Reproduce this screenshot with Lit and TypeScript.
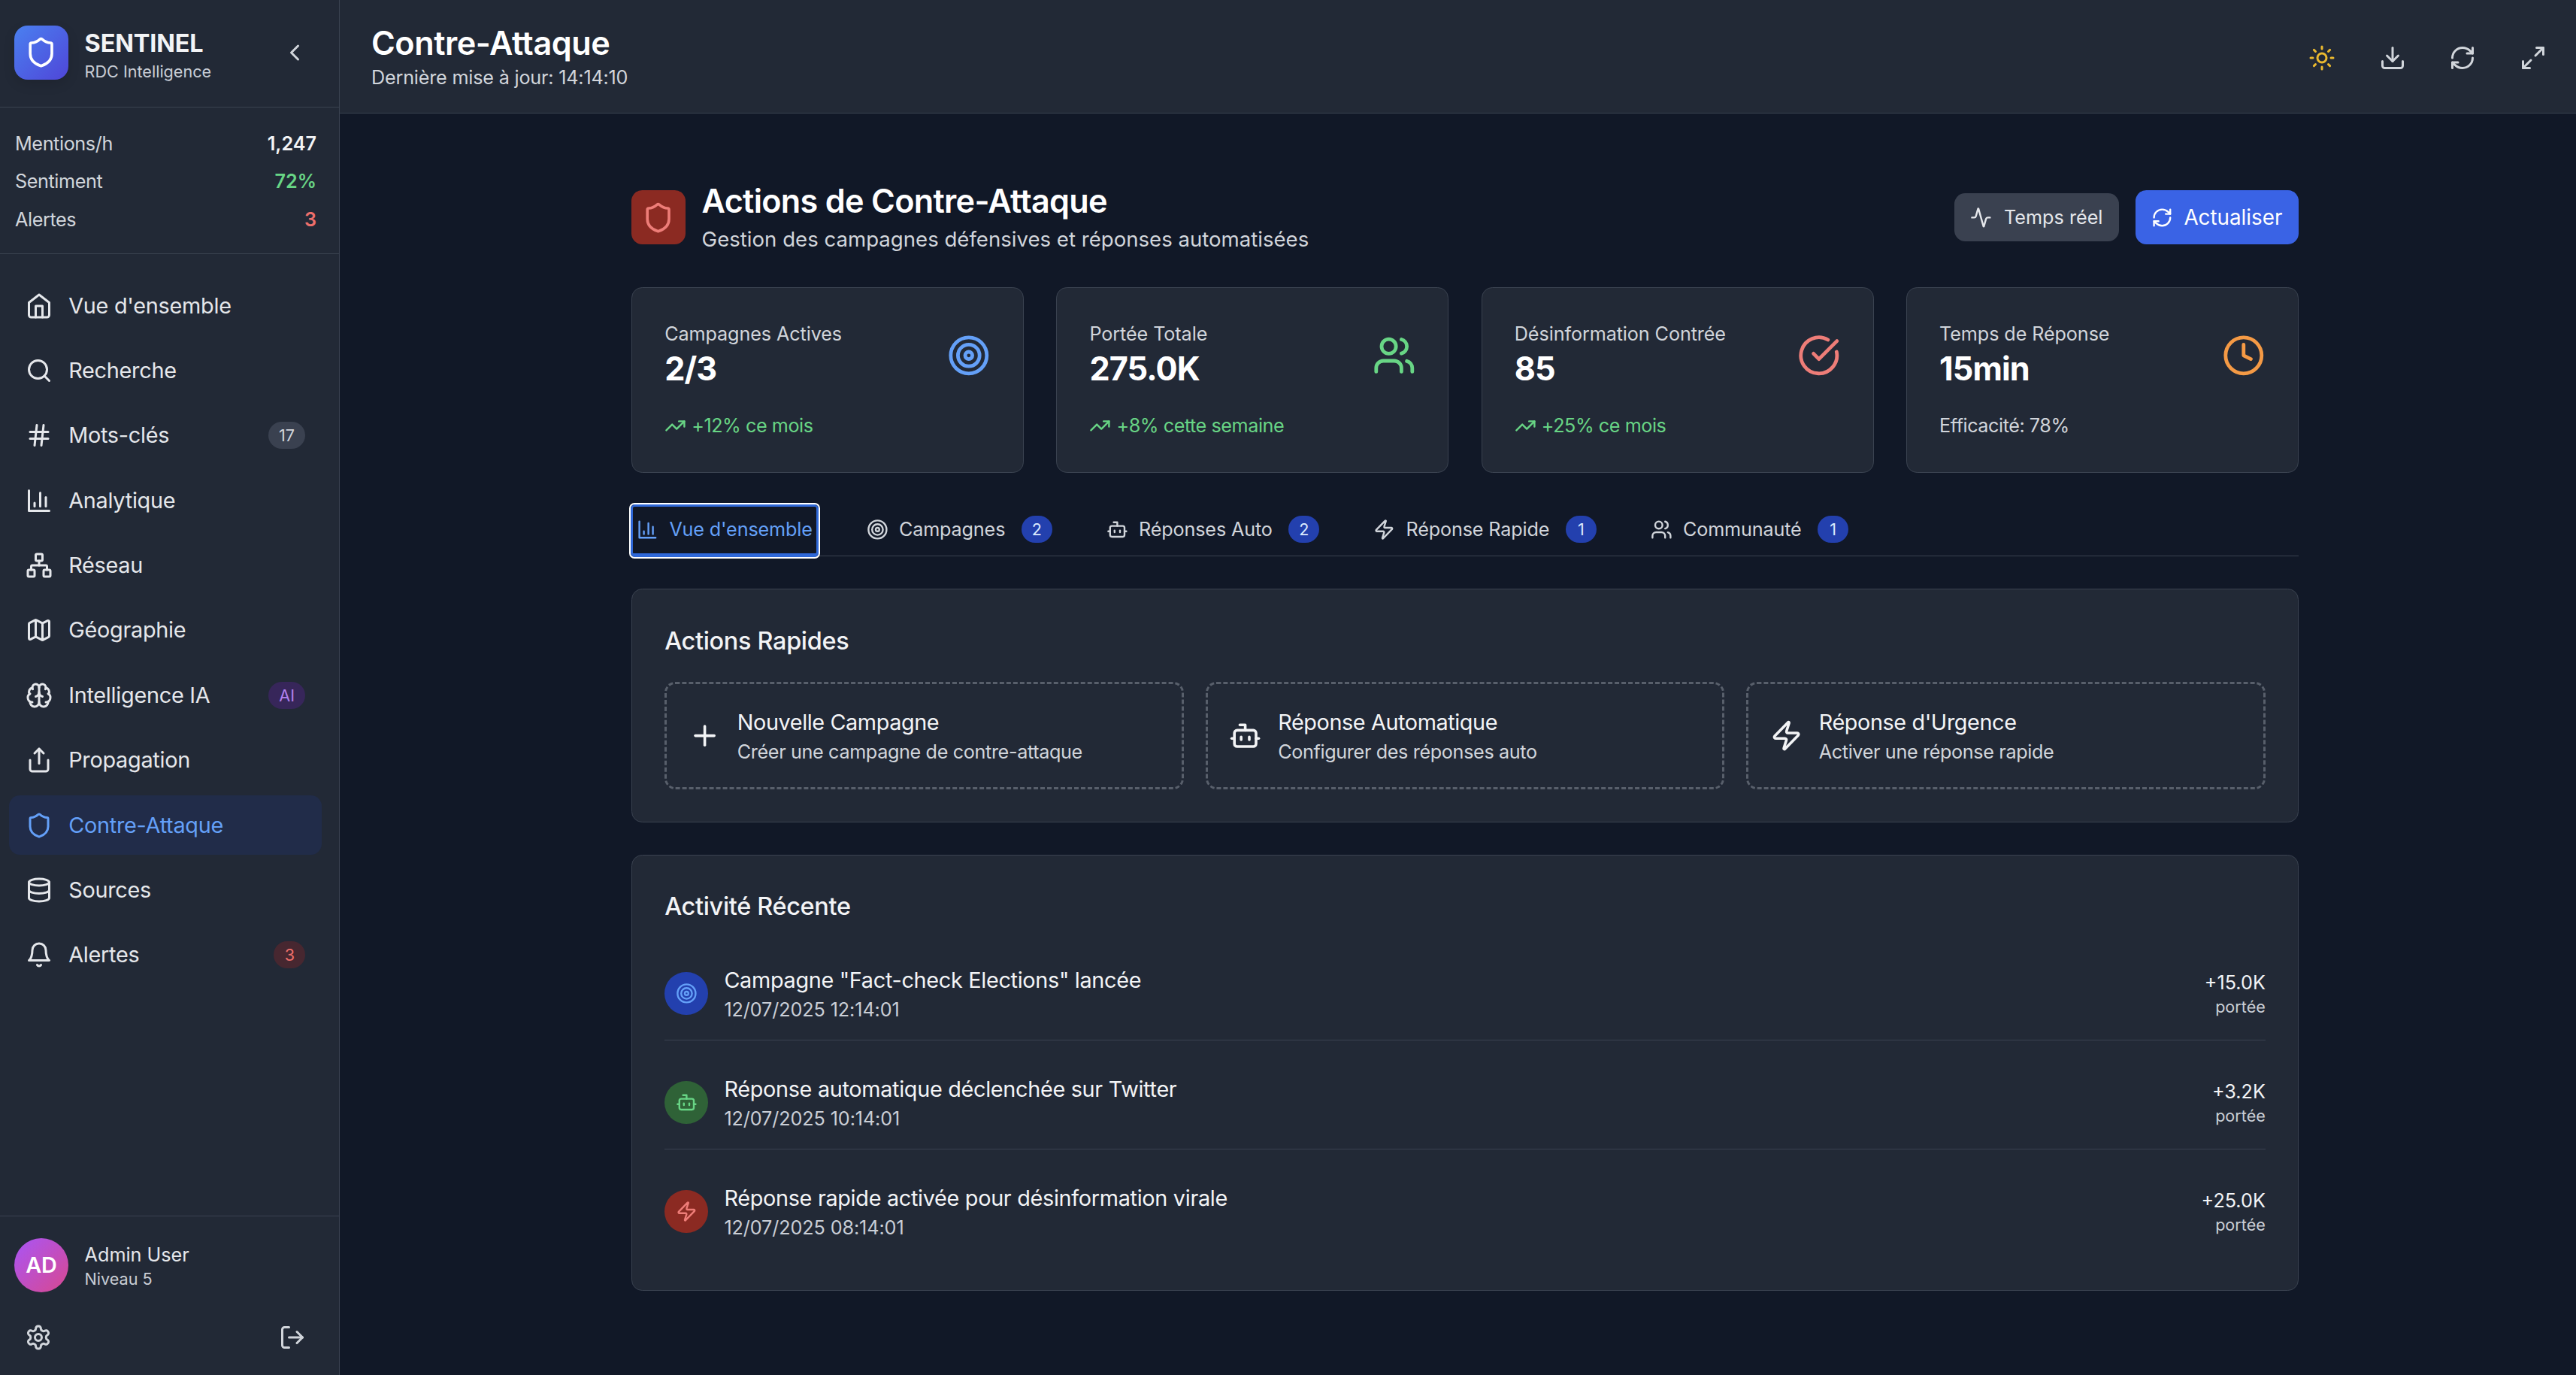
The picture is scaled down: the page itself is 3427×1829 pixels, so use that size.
import { LitElement, html, css, svg } from "lit"
import { customElement } from "lit/decorators.js"

// lucide-style icon bodies, all on a 24 unit grid
const ICONS: Record<string, unknown> = {
  shield: svg`<path d="M20 13c0 5-3.5 7.5-7.66 8.95a1 1 0 0 1-.67-.01C7.5 20.5 4 18 4 13V6a1 1 0 0 1 1-1c2 0 4.5-1.2 6.24-2.72a1.17 1.17 0 0 1 1.52 0C14.51 3.81 17 5 19 5a1 1 0 0 1 1 1z"/>`,
  chevronLeft: svg`<path d="m15 18-6-6 6-6"/>`,
  home: svg`<path d="m3 9 9-7 9 7v11a2 2 0 0 1-2 2H5a2 2 0 0 1-2-2z"/><polyline points="9 22 9 12 15 12 15 22"/>`,
  search: svg`<circle cx="11" cy="11" r="8"/><path d="m21 21-4.3-4.3"/>`,
  hash: svg`<line x1="4" x2="20" y1="9" y2="9"/><line x1="4" x2="20" y1="15" y2="15"/><line x1="10" x2="8" y1="3" y2="21"/><line x1="16" x2="14" y1="3" y2="21"/>`,
  chart: svg`<path d="M3 3v18h18"/><path d="M18 17V9"/><path d="M13 17V5"/><path d="M8 17v-3"/>`,
  network: svg`<rect x="16" y="16" width="6" height="6" rx="1"/><rect x="2" y="16" width="6" height="6" rx="1"/><rect x="9" y="2" width="6" height="6" rx="1"/><path d="M5 16v-3a1 1 0 0 1 1-1h12a1 1 0 0 1 1 1v3"/><path d="M12 12V8"/>`,
  map: svg`<path d="M14.106 5.553a2 2 0 0 0 1.788 0l3.659-1.83A1 1 0 0 1 21 4.619v12.764a1 1 0 0 1-.553.894l-4.553 2.277a2 2 0 0 1-1.788 0l-4.212-2.106a2 2 0 0 0-1.788 0l-3.659 1.83A1 1 0 0 1 3 19.381V6.618a1 1 0 0 1 .553-.894l4.553-2.277a2 2 0 0 1 1.788 0z"/><path d="M15 5.764v15"/><path d="M9 3.236v15"/>`,
  brain: svg`<path d="M12 18V5"/><path d="M15 13a4.17 4.17 0 0 1-3-4 4.17 4.17 0 0 1-3 4"/><path d="M17.598 6.5A3 3 0 1 0 12 5a3 3 0 1 0-5.598 1.5"/><path d="M17.997 5.125a4 4 0 0 1 2.526 5.77"/><path d="M18 18a4 4 0 0 0 2-7.464"/><path d="M19.967 17.483A4 4 0 1 1 12 18a4 4 0 1 1-7.967-.517"/><path d="M6 18a4 4 0 0 1-2-7.464"/><path d="M6.003 5.125a4 4 0 0 0-2.526 5.77"/>`,
  share: svg`<path d="M4 12v8a2 2 0 0 0 2 2h12a2 2 0 0 0 2-2v-8"/><polyline points="16 6 12 2 8 6"/><line x1="12" x2="12" y1="2" y2="15"/>`,
  database: svg`<ellipse cx="12" cy="5" rx="9" ry="3"/><path d="M3 5V19A9 3 0 0 0 21 19V5"/><path d="M3 12A9 3 0 0 0 21 12"/>`,
  bell: svg`<path d="M6 8a6 6 0 0 1 12 0c0 7 3 9 3 9H3s3-2 3-9"/><path d="M10.3 21a1.94 1.94 0 0 0 3.4 0"/>`,
  settings: svg`<path d="M12.22 2h-.44a2 2 0 0 0-2 2v.18a2 2 0 0 1-1 1.73l-.43.25a2 2 0 0 1-2 0l-.15-.08a2 2 0 0 0-2.73.73l-.22.38a2 2 0 0 0 .73 2.73l.15.1a2 2 0 0 1 1 1.72v.51a2 2 0 0 1-1 1.74l-.15.09a2 2 0 0 0-.73 2.73l.22.38a2 2 0 0 0 2.73.73l.15-.08a2 2 0 0 1 2 0l.43.25a2 2 0 0 1 1 1.73V20a2 2 0 0 0 2 2h.44a2 2 0 0 0 2-2v-.18a2 2 0 0 1 1-1.73l.43-.25a2 2 0 0 1 2 0l.15.08a2 2 0 0 0 2.73-.73l.22-.39a2 2 0 0 0-.73-2.73l-.15-.08a2 2 0 0 1-1-1.74v-.5a2 2 0 0 1 1-1.74l.15-.09a2 2 0 0 0 .73-2.73l-.22-.38a2 2 0 0 0-2.73-.73l-.15.08a2 2 0 0 1-2 0l-.43-.25a2 2 0 0 1-1-1.73V4a2 2 0 0 0-2-2z"/><circle cx="12" cy="12" r="3"/>`,
  logout: svg`<path d="M9 21H5a2 2 0 0 1-2-2V5a2 2 0 0 1 2-2h4"/><polyline points="16 17 21 12 16 7"/><line x1="21" x2="9" y1="12" y2="12"/>`,
  sun: svg`<circle cx="12" cy="12" r="4"/><path d="M12 2v2"/><path d="M12 20v2"/><path d="m4.93 4.93 1.41 1.41"/><path d="m17.66 17.66 1.41 1.41"/><path d="M2 12h2"/><path d="M20 12h2"/><path d="m6.34 17.66-1.41 1.41"/><path d="m19.07 4.93-1.41 1.41"/>`,
  download: svg`<path d="M21 15v4a2 2 0 0 1-2 2H5a2 2 0 0 1-2-2v-4"/><polyline points="7 10 12 15 17 10"/><line x1="12" x2="12" y1="15" y2="3"/>`,
  refresh: svg`<path d="M3 12a9 9 0 0 1 9-9 9.75 9.75 0 0 1 6.74 2.74L21 8"/><path d="M21 3v5h-5"/><path d="M21 12a9 9 0 0 1-9 9 9.75 9.75 0 0 1-6.74-2.74L3 16"/><path d="M8 16H3v5"/>`,
  maximize: svg`<polyline points="15 3 21 3 21 9"/><line x1="21" x2="14" y1="3" y2="10"/><polyline points="9 21 3 21 3 15"/><line x1="3" x2="10" y1="21" y2="14"/>`,
  activity: svg`<path d="M22 12h-2.48a2 2 0 0 0-1.93 1.46l-2.35 8.36a.25.25 0 0 1-.48 0L9.24 2.18a.25.25 0 0 0-.48 0l-2.35 8.36A2 2 0 0 1 4.49 12H2"/>`,
  target: svg`<circle cx="12" cy="12" r="10"/><circle cx="12" cy="12" r="6"/><circle cx="12" cy="12" r="2"/>`,
  users: svg`<path d="M16 21v-2a4 4 0 0 0-4-4H6a4 4 0 0 0-4 4v2"/><circle cx="9" cy="7" r="4"/><path d="M22 21v-2a4 4 0 0 0-3-3.87"/><path d="M16 3.13a4 4 0 0 1 0 7.75"/>`,
  check: svg`<path d="M21.801 10A10 10 0 1 1 17 3.335"/><path d="m9 11 3 3L22 4"/>`,
  clock: svg`<circle cx="12" cy="12" r="10"/><polyline points="12 6 12 12 16 14"/>`,
  trending: svg`<polyline points="22 7 13.5 15.5 8.5 10.5 2 17"/><polyline points="16 7 22 7 22 13"/>`,
  bot: svg`<path d="M12 8V4H8"/><rect x="4" y="8" width="16" height="12" rx="2"/><path d="M2 14h2"/><path d="M20 14h2"/><path d="M15 13v2"/><path d="M9 13v2"/>`,
  zap: svg`<path d="M4 14a1 1 0 0 1-.78-1.63l9.9-10.2a.5.5 0 0 1 .86.46l-1.92 6.02A1 1 0 0 0 13 10h7a1 1 0 0 1 .78 1.63l-9.9 10.2a.5.5 0 0 1-.86-.46l1.92-6.02A1 1 0 0 0 11 14z"/>`,
  plus: svg`<path d="M5 12h14"/><path d="M12 5v14"/>`,
}

const icon = (name: string, size: number) => html`<svg
  class="icon"
  width=${size}
  height=${size}
  viewBox="0 0 24 24"
  fill="none"
  stroke="currentColor"
  stroke-width="2"
  stroke-linecap="round"
  stroke-linejoin="round"
>${ICONS[name]}</svg>`

const NAV = [
  { label: "Vue d'ensemble", icon: "home" },
  { label: "Recherche", icon: "search" },
  { label: "Mots-clés", icon: "hash", badge: "17", tone: "gray" },
  { label: "Analytique", icon: "chart" },
  { label: "Réseau", icon: "network" },
  { label: "Géographie", icon: "map" },
  { label: "Intelligence IA", icon: "brain", badge: "AI", tone: "purple" },
  { label: "Propagation", icon: "share" },
  { label: "Contre-Attaque", icon: "shield", active: true },
  { label: "Sources", icon: "database" },
  { label: "Alertes", icon: "bell", badge: "3", tone: "red" },
]

const STATS = [
  { label: "Campagnes Actives", value: "2/3", icon: "target", color: "blue", trend: "+12% ce mois" },
  { label: "Portée Totale", value: "275.0K", icon: "users", color: "green", trend: "+8% cette semaine" },
  { label: "Désinformation Contrée", value: "85", icon: "check", color: "red", trend: "+25% ce mois" },
  { label: "Temps de Réponse", value: "15min", icon: "clock", color: "orange", note: "Efficacité: 78%" },
]

const TABS = [
  { label: "Vue d'ensemble", icon: "chart", active: true },
  { label: "Campagnes", icon: "target", count: 2 },
  { label: "Réponses Auto", icon: "bot", count: 2 },
  { label: "Réponse Rapide", icon: "zap", count: 1 },
  { label: "Communauté", icon: "users", count: 1 },
]

const QUICK = [
  { title: "Nouvelle Campagne", sub: "Créer une campagne de contre-attaque", icon: "plus" },
  { title: "Réponse Automatique", sub: "Configurer des réponses auto", icon: "bot" },
  { title: "Réponse d'Urgence", sub: "Activer une réponse rapide", icon: "zap" },
]

const ACTIVITY = [
  { title: 'Campagne "Fact-check Elections" lancée', time: "12/07/2025 12:14:01", reach: "+15.0K", icon: "target", tone: "blue" },
  { title: "Réponse automatique déclenchée sur Twitter", time: "12/07/2025 10:14:01", reach: "+3.2K", icon: "bot", tone: "green" },
  { title: "Réponse rapide activée pour désinformation virale", time: "12/07/2025 08:14:01", reach: "+25.0K", icon: "zap", tone: "red" },
]

@customElement("app-root")
export class AppRoot extends LitElement {
  static styles = css`
    :host {
      display: flex;
      height: 100vh;
      width: 100%;
      overflow: hidden;
      background: #111827;
      color: #f3f4f6;
      font-family: Inter, "Liberation Sans", sans-serif;
      font-size: 25.2px;
      line-height: 36px;
    }

    .icon {
      flex: none;
      display: block;
    }

    /* sidebar */
    .sidebar {
      flex: none;
      box-sizing: border-box;
      width: 452px;
      display: flex;
      flex-direction: column;
      background: #222936;
      border-right: 1px solid #3a4250;
    }

    .brand {
      box-sizing: border-box;
      height: 143px;
      display: flex;
      align-items: center;
      gap: 21.6px;
      padding: 0 41px 2px 19px;
      border-bottom: 1px solid #3a4250;
    }

    .logo {
      flex: none;
      width: 72px;
      height: 72px;
      border-radius: 18px;
      display: flex;
      align-items: center;
      justify-content: center;
      color: #fff;
      background: linear-gradient(135deg, #4a80f0, #4f46d8);
      box-shadow: 0 6px 16px rgba(0, 0, 0, 0.12);
    }

    .brand-text {
      flex: 1;
    }

    .brand-name {
      margin-top: 3px;
      font-size: 32.4px;
      line-height: 50.4px;
      font-weight: 700;
      letter-spacing: -0.15px;
      color: #f3f4f6;
    }

    .brand-sub {
      margin-top: -3px;
      font-size: 21.6px;
      line-height: 28.8px;
      color: #c9ced6;
    }

    .collapse {
      color: #d1d5db;
    }

    .quick-stats {
      box-sizing: border-box;
      height: 195px;
      padding: 30px 30px 0 20px;
      border-bottom: 1px solid #3a4250;
      display: flex;
      flex-direction: column;
      gap: 14.4px;
    }

    .quick-stats div {
      display: flex;
      justify-content: space-between;
      letter-spacing: -0.4px;
      color: #d1d5db;
    }

    .quick-stats b {
      font-weight: 600;
      letter-spacing: 0;
      color: #f3f4f6;
    }

    .quick-stats b.green {
      color: #68d585;
    }

    .quick-stats b.red {
      color: #ee6f6b;
    }

    nav {
      flex: 1;
      padding: 29px 23px 0 12px;
      display: flex;
      flex-direction: column;
      gap: 7.2px;
    }

    .nav-item {
      box-sizing: border-box;
      height: 79.2px;
      padding: 0 21.6px;
      display: flex;
      align-items: center;
      gap: 21.6px;
      border-radius: 14.4px;
      font-size: 28.8px;
      letter-spacing: -0.25px;
      color: #e5e7eb;
    }

    .nav-item span {
      flex: 1;
    }

    .nav-item.active {
      background: #212c49;
      color: #64a0f8;
    }

    .nav-item em {
      font-style: normal;
      font-size: 21.6px;
      line-height: 36px;
      letter-spacing: 0;
      padding: 0 14.4px;
      border-radius: 18px;
    }

    em.gray {
      background: #3a4150;
      color: #d1d5db;
    }

    em.purple {
      background: #37265a;
      color: #b080ef;
    }

    em.red {
      background: #472730;
      color: #ee6f6b;
    }

    .user {
      box-sizing: border-box;
      height: 212px;
      padding: 29px 21.6px 0 19px;
      border-top: 1px solid #3a4250;
    }

    .user-row {
      display: flex;
      align-items: center;
      gap: 21.6px;
    }

    .avatar {
      flex: none;
      width: 72px;
      height: 72px;
      border-radius: 50%;
      display: flex;
      align-items: center;
      justify-content: center;
      color: #fff;
      font-size: 28.8px;
      font-weight: 600;
      background: linear-gradient(135deg, #a855f7, #d9488f);
    }

    .user-name {
      color: #e5e7eb;
    }

    .user-level {
      font-size: 21.6px;
      line-height: 28.8px;
      color: #c9ced6;
    }

    .user-tools {
      margin-top: 42px;
      padding: 0 22px 0 14px;
      display: flex;
      justify-content: space-between;
      color: #d1d5db;
    }

    /* top bar */
    .main {
      flex: 1;
      min-width: 0;
      display: flex;
      flex-direction: column;
    }

    .topbar {
      flex: none;
      box-sizing: border-box;
      height: 151px;
      padding: 3px 39px 0 42px;
      display: flex;
      align-items: center;
      justify-content: space-between;
      background: #222936;
      border-bottom: 1px solid #3a4250;
    }

    .page-title {
      font-size: 43.2px;
      line-height: 50px;
      font-weight: 600;
      letter-spacing: -0.45px;
      color: #fff;
    }

    .page-sub {
      margin-top: 3px;
      letter-spacing: -0.2px;
      color: #d1d5db;
    }

    .top-tools {
      display: flex;
      gap: 57.6px;
      color: #d1d5db;
    }

    .top-tools .sun {
      color: #ebb92f;
    }

    /* content */
    .content {
      flex: 1;
      padding: 88px 0 0 388px;
    }

    .column {
      width: 2218px;
      display: flex;
      flex-direction: column;
    }

    .head {
      display: flex;
      align-items: center;
      gap: 21.6px;
      margin-bottom: 42px;
    }

    .head-icon {
      flex: none;
      width: 72px;
      height: 72px;
      border-radius: 14.4px;
      display: flex;
      align-items: center;
      justify-content: center;
      background: #8b2a22;
      color: #ee7d78;
    }

    .head-text {
      flex: 1;
    }

    .head-title {
      font-size: 43.2px;
      line-height: 57.6px;
      font-weight: 600;
      letter-spacing: -0.7px;
      color: #fff;
    }

    .head-sub {
      font-size: 27.6px;
      line-height: 43.2px;
      color: #d1d5db;
    }

    .btn {
      display: flex;
      align-items: center;
      gap: 14.4px;
      box-sizing: border-box;
      border-radius: 14.4px;
      padding: 0 21.6px;
    }

    .btn.ghost {
      height: 64px;
      gap: 16px;
      background: #3a4150;
      color: #e5e7eb;
    }

    .btn.primary {
      height: 72px;
      font-size: 27.8px;
      background: #3a63e5;
      color: #fff;
    }

    .stats {
      display: grid;
      grid-template-columns: repeat(4, 1fr);
      gap: 43.2px;
    }

    .panel {
      box-sizing: border-box;
      background: #222936;
      border: 1px solid #3a4250;
      border-radius: 14.4px;
      padding: 43.2px;
    }

    .stat-top {
      display: flex;
      align-items: center;
      justify-content: space-between;
    }

    .stat-label {
      letter-spacing: -0.1px;
      color: #d1d5db;
    }

    .stat-value {
      font-size: 43.2px;
      line-height: 57.6px;
      font-weight: 700;
      letter-spacing: -0.9px;
      color: #fff;
    }

    .stat-foot {
      margin-top: 28.8px;
      display: flex;
      align-items: center;
      gap: 7.2px;
      letter-spacing: -0.45px;
      color: #68d585;
    }

    .stat-foot.plain {
      color: #d1d5db;
    }

    .blue {
      color: #64a0f8;
    }

    .green {
      color: #68d585;
    }

    .red {
      color: #ee7d78;
    }

    .orange {
      color: #f59a45;
    }

    /* tabs */
    .tabs {
      margin: 43.2px 0;
      display: flex;
      gap: 57.6px;
      border-bottom: 1px solid #3a4250;
    }

    .tab {
      box-sizing: border-box;
      position: relative;
      margin-bottom: -1px;
      padding: 14.4px 7.2px 18px;
      display: flex;
      align-items: center;
      gap: 14.4px;
      letter-spacing: -0.15px;
      color: #d1d5db;
    }

    .tab.active {
      color: #64a0f8;
      border-radius: 4px;
      outline: 2px solid #fff;
      outline-offset: 1px;
      box-shadow:
        0 0 0 1px #2f68d8,
        inset 0 0 0 2px #2f68d8,
        inset 0 -4px 0 #2f68d8;
    }

    .tab i {
      font-style: normal;
      margin-left: 7.2px;
      width: 41px;
      height: 36px;
      border-radius: 18px;
      display: flex;
      align-items: center;
      justify-content: center;
      font-size: 21.6px;
      background: #2340ae;
      color: #dbeafe;
    }

    .panel-title {
      font-size: 32.4px;
      line-height: 50.4px;
      font-weight: 500;
      letter-spacing: -0.3px;
      color: #f3f4f6;
    }

    .quick {
      margin-top: 28.8px;
      display: grid;
      grid-template-columns: repeat(3, 1fr);
      gap: 28.8px;
    }

    .quick-card {
      box-sizing: border-box;
      border: 3px dashed #585f6b;
      border-radius: 14.4px;
      padding: 28.8px;
      display: flex;
      align-items: center;
      gap: 21.6px;
      color: #f3f4f6;
    }

    .quick-title {
      font-size: 28.8px;
      line-height: 43.2px;
      letter-spacing: -0.4px;
    }

    .quick-sub {
      letter-spacing: -0.36px;
      color: #d1d5db;
    }

    .recent {
      margin-top: 43.2px;
    }

    .feed {
      margin-top: 28.8px;
      display: flex;
      flex-direction: column;
      gap: 21.6px;
    }

    .feed-row {
      padding: 21.6px 0;
      display: flex;
      align-items: center;
      gap: 21.6px;
      border-bottom: 1px solid #3a4250;
    }

    .feed-row:last-child {
      border-bottom: none;
    }

    .dot {
      flex: none;
      width: 57.6px;
      height: 57.6px;
      border-radius: 50%;
      display: flex;
      align-items: center;
      justify-content: center;
    }

    .dot.blue {
      background: #2340ae;
    }

    .dot.green {
      background: #2f6237;
    }

    .dot.red {
      background: #8b2a22;
    }

    .feed-text {
      flex: 1;
    }

    .feed-title {
      font-size: 28.8px;
      line-height: 43.2px;
      letter-spacing: -0.3px;
      color: #f3f4f6;
    }

    .feed-time {
      letter-spacing: -0.1px;
      color: #c9ced6;
    }

    .feed-reach {
      text-align: right;
      color: #f3f4f6;
    }

    .feed-reach small {
      display: block;
      font-size: 21.6px;
      line-height: 28.8px;
      color: #c9ced6;
    }
  `

  renderSidebar() {
    return html`
      <aside class="sidebar">
        <div class="brand">
          <div class="logo">${icon("shield", 43.2)}</div>
          <div class="brand-text">
            <div class="brand-name">SENTINEL</div>
            <div class="brand-sub">RDC Intelligence</div>
          </div>
          <div class="collapse">${icon("chevronLeft", 36)}</div>
        </div>
        <div class="quick-stats">
          <div>Mentions/h <b>1,247</b></div>
          <div>Sentiment <b class="green">72%</b></div>
          <div>Alertes <b class="red">3</b></div>
        </div>
        <nav>
          ${NAV.map(
            (n) => html`
              <div class="nav-item ${n.active ? "active" : ""}">
                ${icon(n.icon, 36)}
                <span>${n.label}</span>
                ${n.badge ? html`<em class=${n.tone}>${n.badge}</em>` : ""}
              </div>
            `
          )}
        </nav>
        <div class="user">
          <div class="user-row">
            <div class="avatar">AD</div>
            <div>
              <div class="user-name">Admin User</div>
              <div class="user-level">Niveau 5</div>
            </div>
          </div>
          <div class="user-tools">
            ${icon("settings", 36)} ${icon("logout", 36)}
          </div>
        </div>
      </aside>
    `
  }

  renderStat(s: (typeof STATS)[number]) {
    return html`
      <div class="panel">
        <div class="stat-top">
          <div>
            <div class="stat-label">${s.label}</div>
            <div class="stat-value">${s.value}</div>
          </div>
          <div class=${s.color}>${icon(s.icon, 57.6)}</div>
        </div>
        ${s.trend
          ? html`<div class="stat-foot">${icon("trending", 28.8)} ${s.trend}</div>`
          : html`<div class="stat-foot plain">${s.note}</div>`}
      </div>
    `
  }

  render() {
    return html`
      ${this.renderSidebar()}
      <div class="main">
        <header class="topbar">
          <div>
            <div class="page-title">Contre-Attaque</div>
            <div class="page-sub">Dernière mise à jour: 14:14:10</div>
          </div>
          <div class="top-tools">
            <span class="sun">${icon("sun", 36)}</span>
            ${icon("download", 36)} ${icon("refresh", 36)} ${icon("maximize", 36)}
          </div>
        </header>
        <main class="content">
          <div class="column">
            <div class="head">
              <div class="head-icon">${icon("shield", 43.2)}</div>
              <div class="head-text">
                <div class="head-title">Actions de Contre-Attaque</div>
                <div class="head-sub">Gestion des campagnes défensives et réponses automatisées</div>
              </div>
              <div class="btn ghost">${icon("activity", 28.8)} Temps réel</div>
              <div class="btn primary">${icon("refresh", 28.8)} Actualiser</div>
            </div>

            <div class="stats">${STATS.map((s) => this.renderStat(s))}</div>

            <div class="tabs">
              ${TABS.map(
                (t) => html`
                  <div class="tab ${t.active ? "active" : ""}">
                    ${icon(t.icon, 28.8)} ${t.label}
                    ${t.count ? html`<i>${t.count}</i>` : ""}
                  </div>
                `
              )}
            </div>

            <section class="panel">
              <div class="panel-title">Actions Rapides</div>
              <div class="quick">
                ${QUICK.map(
                  (q) => html`
                    <div class="quick-card">
                      ${icon(q.icon, 43.2)}
                      <div>
                        <div class="quick-title">${q.title}</div>
                        <div class="quick-sub">${q.sub}</div>
                      </div>
                    </div>
                  `
                )}
              </div>
            </section>

            <section class="panel recent">
              <div class="panel-title">Activité Récente</div>
              <div class="feed">
                ${ACTIVITY.map(
                  (a) => html`
                    <div class="feed-row">
                      <div class="dot ${a.tone}">${icon(a.icon, 28.8)}</div>
                      <div class="feed-text">
                        <div class="feed-title">${a.title}</div>
                        <div class="feed-time">${a.time}</div>
                      </div>
                      <div class="feed-reach">${a.reach}<small>portée</small></div>
                    </div>
                  `
                )}
              </div>
            </section>
          </div>
        </main>
      </div>
    `
  }
}
